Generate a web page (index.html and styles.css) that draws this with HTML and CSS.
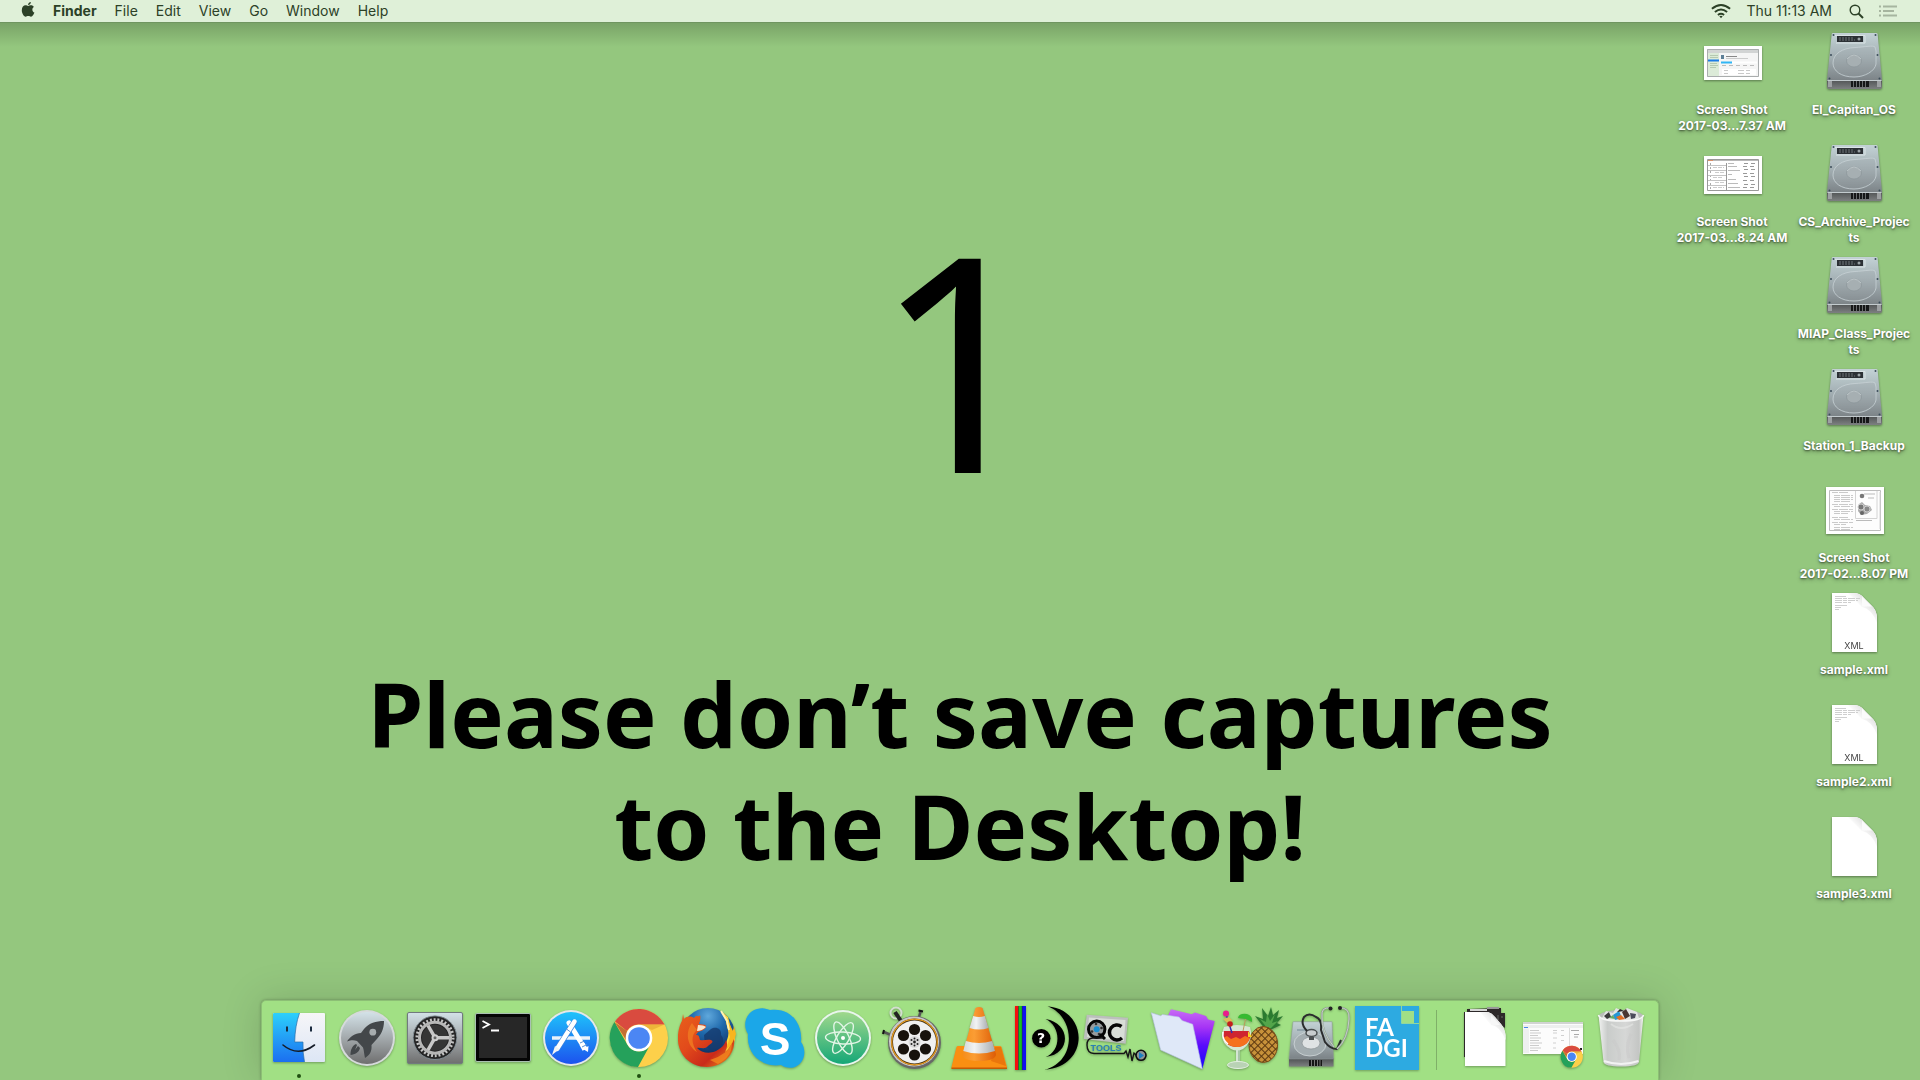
FILE: index.html
```html
<!DOCTYPE html>
<html lang="en">
<head>
<meta charset="utf-8">
<title>Finder</title>
<link rel="stylesheet" href="styles.css">
</head>
<body>
<svg class="defs" width="0" height="0" aria-hidden="true">
  <defs>
    <linearGradient id="metal" x1="0" y1="0" x2="0" y2="1"><stop offset="0" stop-color="#c3d2d5"/><stop offset=".5" stop-color="#a3afb3"/><stop offset="1" stop-color="#7b8286"/></linearGradient>
    <linearGradient id="metalFront" x1="0" y1="0" x2="0" y2="1"><stop offset="0" stop-color="#4c4f50"/><stop offset="1" stop-color="#7d8081"/></linearGradient>
    <linearGradient id="silver" x1="0" y1="0" x2="0" y2="1"><stop offset="0" stop-color="#d3e2e8"/><stop offset=".5" stop-color="#a3a9ac"/><stop offset="1" stop-color="#6f6f6f"/></linearGradient>
    <linearGradient id="finderBlue" x1="0" y1="0" x2="0" y2="1"><stop offset="0" stop-color="#2cd0fb"/><stop offset="1" stop-color="#1b6ff0"/></linearGradient>
    <linearGradient id="finderWhite" x1="0" y1="0" x2="0" y2="1"><stop offset="0" stop-color="#f6f6f8"/><stop offset="1" stop-color="#dde6f5"/></linearGradient>
    <linearGradient id="storeBlue" x1="0" y1="0" x2="0" y2="1"><stop offset="0" stop-color="#1fc3fb"/><stop offset="1" stop-color="#1c52ee"/></linearGradient>
    <linearGradient id="atomGreen" x1="0" y1="0" x2="0" y2="1"><stop offset="0" stop-color="#a0d88c"/><stop offset="1" stop-color="#15a777"/></linearGradient>
    <linearGradient id="violet" x1="0" y1="0" x2="0" y2="1"><stop offset="0" stop-color="#c86cf5"/><stop offset=".3" stop-color="#a634f5"/><stop offset=".6" stop-color="#5a0cfc"/><stop offset="1" stop-color="#1408fa"/></linearGradient>
    <linearGradient id="foxFur" x1="0" y1="0" x2="1" y2="1"><stop offset="0" stop-color="#e8601c"/><stop offset=".4" stop-color="#e24a1b"/><stop offset=".7" stop-color="#c92a1a"/><stop offset="1" stop-color="#f6a21b"/></linearGradient>
    <radialGradient id="globe" cx=".5" cy=".15" r=".8"><stop offset="0" stop-color="#5fa8dc"/><stop offset=".4" stop-color="#1f69ac"/><stop offset="1" stop-color="#0d2350"/></radialGradient>
    <linearGradient id="coneOrange" x1="0" y1="0" x2="1" y2="0"><stop offset="0" stop-color="#f58d1c"/><stop offset=".35" stop-color="#fb9d34"/><stop offset="1" stop-color="#dd5c06"/></linearGradient>
    <linearGradient id="coneWhite" x1="0" y1="0" x2="1" y2="0"><stop offset="0" stop-color="#d5d8da"/><stop offset=".35" stop-color="#f2f3f4"/><stop offset="1" stop-color="#a7acb0"/></linearGradient>
    <linearGradient id="bin" x1="0" y1="0" x2="1" y2="0"><stop offset="0" stop-color="#f1f2f1"/><stop offset=".2" stop-color="#c9ccca"/><stop offset=".6" stop-color="#d6d7d6"/><stop offset=".9" stop-color="#c4c6c4"/><stop offset="1" stop-color="#f4f5f4"/></linearGradient>
    <linearGradient id="curl" x1="0" y1="1" x2="1" y2="0"><stop offset="0" stop-color="#ffffff"/><stop offset=".45" stop-color="#ffffff"/><stop offset="1" stop-color="#c4c4c4"/></linearGradient>
    <pattern id="scales" width="5" height="5" patternUnits="userSpaceOnUse" patternTransform="rotate(45)"><rect width="5" height="5" fill="#c8923a"/><path d="M0 0H5M0 0V5" stroke="#5c3810" stroke-width="2.200"/></pattern>

    <symbol id="drive" viewBox="0 0 64 72">
      <path d="M5 52H60V60Q60 62 58 62H7Q5 62 5 60Z" fill="url(#metalFront)"/>
      <path d="M6 54h4v6H6zM55 54h4v6h-4z" fill="#9da0a2"/>
      <path d="M29 54h18v6H29z" fill="#161718"/>
      <path d="M31.500 54v6M34.500 54v6M37.500 54v6M40.500 54v6M43.500 54v6" stroke="#696c6d"/>
      <path d="M11 6H54Q55.500 6 55.600 7L60 52.500Q60 54 59 54H6Q5 54 5 52.500L9.700 7Q10 6 11 6Z" fill="url(#metal)"/>
      <path d="M5.500 53.500H59.500" stroke="#c3cbce"/>
      <path d="M13 8.500H43V16H14" fill="none" stroke="#dbe4e6" stroke-width="1"/>
      <path d="M15 9H41V15H15Z" fill="#2c3135"/>
      <path d="M17 11H31M17 13H33" stroke="#8a9396" stroke-dasharray="2 1" stroke-width=".7"/>
      <circle cx="37" cy="12" r="1.500" fill="#9aa2a5"/>
      <path d="M54 24V37C53 44 43 50 32 50C19 50 11 44 11 36C11 27 20 21 33 20.500C43 20 51 18 53 20Z" fill="#9aa5a9" fill-opacity=".25" stroke="#c8d2d5" stroke-width=".8"/>
      <ellipse cx="32" cy="34" rx="7.500" ry="6" fill="#a6afb2" stroke="#8b9599" stroke-width=".7"/>
      <path d="M25 32Q32 24 39 32" fill="none" stroke="#ccd4d6" stroke-width=".7"/>
      <g fill="#3b4d5a"><circle cx="11.500" cy="8" r="1"/><circle cx="53.500" cy="8" r="1"/><circle cx="9" cy="28" r="1"/><circle cx="55.500" cy="28" r="1"/><circle cx="7.500" cy="51.500" r="1"/><circle cx="57.500" cy="51.500" r="1"/></g>
    </symbol>
    <symbol id="sheet" viewBox="0 0 64 72">
      <path d="M10 6H32Q38 6 42 11L51 20Q55 25 55 31V65H10Z" fill="#fff"/>
      <path d="M26 6H32Q38 6 42 11L51 20Q55 25 55 31V36Q50 22 40 20Z" fill="url(#curl)"/>
      <path d="M40 9.500V19.500H50Z" fill="#fbfbfb"/>
    </symbol>
    <symbol id="sheetText" viewBox="0 0 64 72">
      <g stroke="#cfcfcf" stroke-width="1" fill="none"><path d="M13 9.500H24"/><path d="M13 11.500H39M13 13.500H36M13 15.500H29" stroke-dasharray="7 1 4 1"/><path d="M13 18.500H25M13 20.500H19M13 22.500H17"/></g>
    </symbol>
    <symbol id="chrome" viewBox="0 0 64 64">
      <circle cx="32" cy="32" r="29" fill="#fdd04a"/>
      <path d="M8 15.500A29 29 0 0 1 57.500 18.500H32A13.500 13.500 0 0 0 20 25Z" fill="#d94b3f"/>
      <path d="M7.500 16A29 29 0 0 0 31 61L42 41A13.500 13.500 0 0 1 20 38Z" fill="#25a15b"/>
      <path d="M32 18.500H57.500L45 24Z" fill="#e3a32e" opacity=".6"/>
      <path d="M7.500 16L19 34L20 25Z" fill="#9f2f27" opacity=".6"/>
      <circle cx="32" cy="32" r="13.300" fill="#fff"/>
      <circle cx="32" cy="32" r="10.800" fill="#4b86f4"/>
    </symbol>
  </defs>
</svg>

<header class="menubar">
  <nav class="menus" aria-label="Menu bar">
    <button class="menu menu-apple" type="button" aria-label="Apple">
      <svg width="14" height="18" viewBox="0 0 14 18"><path d="M9.900 2C9.800 3.700 8.600 5 7 5.100C6.900 3.600 8.300 2.200 9.900 2Z"/><path d="M7.100 6C7.900 6 8.700 5.300 10 5.300C11.200 5.300 12.300 6 12.900 6.900C10.600 8.300 11 11.500 13.400 12.500C12.700 14.500 11.500 16.700 10 16.700C9 16.700 8.600 16 7.300 16C6 16 5.600 16.700 4.600 16.700C2.800 16.600 .8 13.200 .8 10.200C.8 7.100 2.600 5.300 4.500 5.300C5.600 5.300 6.400 6 7.100 6Z"/></svg>
    </button>
    <button class="menu menu-app" type="button">Finder</button>
    <button class="menu" type="button">File</button>
    <button class="menu" type="button">Edit</button>
    <button class="menu" type="button">View</button>
    <button class="menu" type="button">Go</button>
    <button class="menu" type="button">Window</button>
    <button class="menu" type="button">Help</button>
  </nav>
  <div class="status">
    <button class="menu" type="button" aria-label="Wi-Fi">
      <svg width="20" height="16" viewBox="0 0 20 16"><g fill="none" stroke="#2c4127" stroke-width="2"><path d="M.9 5.800Q10-1.800 19.100 5.800"/><path d="M3.900 9Q10 4 16.100 9"/><path d="M6.900 12Q10 9.700 13.100 12"/></g><path d="M8.300 13.300Q10 12 11.700 13.300L10 15.300Z"/></svg>
    </button>
    <button class="menu clock" type="button">Thu 11:13 AM</button>
    <button class="menu" type="button" aria-label="Spotlight">
      <svg width="15" height="15" viewBox="0 0 15 15"><g fill="none" stroke="#2c4127"><circle cx="6" cy="6" r="4.800" stroke-width="1.400"/><path d="M9.500 9.500L14 14" stroke-width="2"/></g></svg>
    </button>
    <button class="menu" type="button" aria-label="Notification Center">
      <svg width="18" height="12" viewBox="0 0 18 12"><path d="M0 1.500H2M4 1.500H18M0 6H2M4 6H15M0 10.500H2M4 10.500H18" stroke="#a6b59f" stroke-width="2"/></svg>
    </button>
  </div>
</header>

<main class="desktop">
  <div class="wallpaper">
    <p class="station">1</p>
    <h1 class="notice">Please don’t save captures<br>to the Desktop!</h1>
  </div>

  <ul class="files">
    <li class="file"><svg class="file-icon" viewBox="0 0 64 72"><use href="#drive"/></svg><span>El_Capitan_OS</span></li>
    <li class="file"><svg class="file-icon" viewBox="0 0 64 72"><use href="#drive"/></svg><span>CS_Archive_Projec<br>ts</span></li>
    <li class="file"><svg class="file-icon" viewBox="0 0 64 72"><use href="#drive"/></svg><span>MIAP_Class_Projec<br>ts</span></li>
    <li class="file"><svg class="file-icon" viewBox="0 0 64 72"><use href="#drive"/></svg><span>Station_1_Backup</span></li>
    <li class="file"><svg class="file-icon" viewBox="0 0 64 72">
      <path d="M4 12H62V59H4Z" fill="#fff"/><path d="M7.500 15.500H58.500V55.500H7.500Z" fill="#fdfdfd" stroke="#bdbdbd"/>
      <path d="M10 17.500H27M12 20.500H31M12 22.500H31M12 24.500H31M12 26.500H28M10 29.500H31M12 31.500H31M10 34.500H31M12 36.500H31M12 38.500H26M10 42.500H27M12 44.500H31M10 47.500H31M12 49.500H24M12 52.500H31M12 54.500H28" stroke="#cacaca" stroke-dasharray="6 1 9 1"/>
      <path d="M33.500 16V43.500H55V16M58 17V54" fill="none" stroke="#d4d4d4"/><path d="M34 45.500H50M42 19H53M46 23H52" stroke="#bbb"/>
      <circle cx="40" cy="21" r="2.300" fill="#777"/><path d="M37 29L40 27L43 30L48 31L50 35L45 39L39 40L36 36Z" fill="#aaa"/><circle cx="39" cy="32" r="3" fill="#777" stroke="#ccc"/><circle cx="45" cy="34" r="3" fill="#888" stroke="#ccc"/><circle cx="40" cy="38" r="2" fill="#666"/>
    </svg><span>Screen Shot<br>2017-02…8.07 PM</span></li>
    <li class="file"><svg class="file-icon" viewBox="0 0 64 72"><use href="#sheet"/><use href="#sheetText"/><text class="kind" x="32" y="62" text-anchor="middle">XML</text></svg><span>sample.xml</span></li>
    <li class="file"><svg class="file-icon" viewBox="0 0 64 72"><use href="#sheet"/><use href="#sheetText"/><text class="kind" x="32" y="62" text-anchor="middle">XML</text></svg><span>sample2.xml</span></li>
    <li class="file"><svg class="file-icon" viewBox="0 0 64 72"><use href="#sheet"/></svg><span>sample3.xml</span></li>
    <li class="file"><svg class="file-icon" viewBox="0 0 64 72">
      <path d="M4 19H62V53H4Z" fill="#fff"/><path d="M7 22H59V50H7Z" fill="#f5f5f5"/><path d="M7 22H59V26H7Z" fill="#d2d4d4"/><path d="M7 26H19V50H7Z" fill="#dcebd8"/><path d="M7.500 22.500H58.500V49.500H7.500Z" fill="none" stroke="#a9adad"/>
      <path d="M8 33.500H19" stroke="#1b7ce8" stroke-width="2"/><path d="M10 28.500H18M10 30.500H18M10 36.500H17M10 38.500H18M10 40.500H16" stroke="#b5c9b1"/>
      <path d="M21 28H24V32H21Z" fill="#5d7f96"/><path d="M26 29.500H37" stroke="#888"/><path d="M26 31.500H48" stroke="#ccc"/><path d="M21 35.500H32" stroke="#30b6f5" stroke-width="2"/><path d="M32 35.500H57" stroke="#fff" stroke-width="2"/><path d="M22 38.500H56" stroke="#bbb" stroke-dasharray="4 3"/>
      <path d="M22 42H56V48H22Z" fill="#fff"/><path d="M24 43.500H56M24 46.500H56" stroke="#c9c9c9" stroke-dasharray="4 10 6 2"/>
    </svg><span>Screen Shot<br>2017-03…7.37 AM</span></li>
    <li class="file"><svg class="file-icon" viewBox="0 0 64 72">
      <path d="M4 17H62V55H4Z" fill="#fff"/><path d="M7.500 20.500H58.500V51.500H7.500Z" fill="#fff" stroke="#999"/><path d="M8 21.500H58" stroke="#b9b9b9"/><path d="M8 21.500H13" stroke="#d88f6a"/>
      <path d="M26.500 24V51" stroke="#999"/><path d="M10.500 24V51" stroke="#aaa" stroke-dasharray="2 2"/>
      <path d="M8 26.500H26M8 31.500H26M8 36.500H26M8 41.500H26M8 46.500H26" stroke="#c4c4c4"/><path d="M13 28.500H24M15 33.500H25M13 38.500H22M15 43.500H25M13 48.500H24" stroke="#ccc" stroke-dasharray="4 1"/>
      <path d="M28 24.500H34M28 27.500H37M28 31.500H40M28 35.500H32M28 40.500H36M28 44.500H38M28 48.500H40" stroke="#bbb"/>
      <path d="M44 24.500H57M43 27.500H57M44 30.500H57M43 34.500H57M44 37.500H57M43 41.500H57M44 45.500H57M43 48.500H57" stroke="#999" stroke-dasharray="4 3"/>
    </svg><span>Screen Shot<br>2017-03…8.24 AM</span></li>
  </ul>

  <nav class="dock" aria-label="Dock">
    <button class="app running" type="button" aria-label="Finder"><svg viewBox="0 0 64 64">
      <rect x="6" y="7" width="52" height="49" rx="1" fill="url(#finderWhite)"/>
      <path d="M7 7H32.500Q28 20 27.700 36H36Q35.500 46 37.500 56H7Q6 56 6 55V8Q6 7 7 7Z" fill="url(#finderBlue)"/>
      <path d="M32.500 7Q28 20 27.700 36H36Q35.500 46 37.500 56" fill="none" stroke="#2c6ea8" stroke-width=".7"/>
      <path d="M20 20.500V25.500M44 20.500V25.500" stroke="#1b2b3f" stroke-width="2"/>
      <path d="M16 39Q31 51.500 47.500 39" fill="none" stroke="#151c28" stroke-width="1.600" stroke-linecap="round"/>
    </svg></button>
    <button class="app" type="button" aria-label="Launchpad"><svg viewBox="0 0 64 64">
      <circle cx="32" cy="32" r="28" fill="#d6dadb"/><circle cx="32" cy="32" r="26" fill="url(#silver)"/>
      <path d="M49 15C41 15 34 17 29 23L26 27C20 27 15 31 12 35.500C16 34 19 34 22 35L28 41.500C29 44 29 48 30 52C35 49 37 45 36.500 39L41 34C46 29 49 23 49 15Z" fill="#43474a"/>
      <circle cx="37.800" cy="26.200" r="3.400" fill="#a6acae"/>
      <path d="M21 38C17 40 15.500 44 15.500 49C20 48.500 24 46.500 25 42L23 40L20 44L22 39Z" fill="#43474a"/>
    </svg></button>
    <button class="app" type="button" aria-label="System Preferences"><svg viewBox="0 0 64 64">
      <rect x="4.500" y="6.500" width="55" height="51" rx="1.500" fill="url(#silver)" stroke="#717a7e"/>
      <circle cx="32" cy="31.700" r="22" fill="#252526"/><circle cx="32" cy="31.700" r="21.800" fill="none" stroke="#93a1a8" stroke-width=".8"/>
      <circle cx="32" cy="31.700" r="18" fill="none" stroke="#c6c6c6" stroke-width="3" stroke-dasharray="1.900 1.870"/>
      <circle cx="32" cy="31.700" r="15.500" fill="none" stroke="#b7b7b7" stroke-width="3"/>
      <circle cx="32" cy="31.700" r="13" fill="#353535"/>
      <path d="M32 31.700H46M32 31.700L25 19.500M32 31.700L25 44" stroke="#c8c8c8" stroke-width="3.500"/>
      <circle cx="32" cy="31.700" r="3.500" fill="#cfcfcf"/><circle cx="32" cy="31.700" r="1.500" fill="#666"/>
    </svg></button>
    <button class="app" type="button" aria-label="Terminal"><svg viewBox="0 0 64 64">
      <rect x="4.500" y="7.500" width="55" height="48" rx="1.500" fill="#050505" stroke="#a9c0b2"/><rect x="8" y="11" width="48" height="41" fill="#272727"/>
      <path d="M11.500 15L18 18.500L11.500 22M20 24.500H28" fill="none" stroke="#fff" stroke-width="1.800"/>
    </svg></button>
    <button class="app" type="button" aria-label="App Store"><svg viewBox="0 0 64 64">
      <circle cx="32" cy="32" r="28" fill="#e4e8ea"/><circle cx="32" cy="32" r="26" fill="url(#storeBlue)"/>
      <path d="M13 32H51" stroke="#e9f1fa" stroke-width="3.500"/>
      <path d="M30 17L43 38" stroke="#fff" stroke-width="5" stroke-linecap="round"/><path d="M43 38L46 43.500" stroke="#fff" stroke-width="5.500"/><path d="M41 37L45.500 35M43 41L48 38.500" stroke="#5a91d0" stroke-width="1"/><path d="M44 43L49.500 40L49 46Z" fill="#fff"/>
      <path d="M36 15L18 43" stroke="#3f84dd" stroke-width="6"/><path d="M35.500 15.500L18 43" stroke="#fff" stroke-width="4.500" stroke-linecap="round"/><path d="M16 40L20.500 43L13 49Z" fill="#f3f3f3"/><path d="M27.500 23L31.500 26" stroke="#5a91d0"/>
    </svg></button>
    <button class="app running" type="button" aria-label="Google Chrome"><svg viewBox="0 0 64 64"><use href="#chrome"/></svg></button>
    <button class="app" type="button" aria-label="Firefox"><svg viewBox="0 0 64 64">
      <circle cx="33" cy="29" r="27" fill="url(#globe)"/>
      <path d="M36 23C40 20 47 22 46 29C51 34 47 42 39 46L30 40L29 29Z" fill="#153a6d" opacity=".8"/>
      <path d="M46 5C49 9 52 14 52 20C54 24 54 29 52 34C50 42 44 47 36 47L40 55L55 47L60 34L59 23L57 26L53 11Z" fill="#fbd838"/>
      <path d="M49 7L52 20L55 31L51 43L58 39L61 28L59 20L58 25Z" fill="#f7b51f"/><path d="M46 5L52 15L54 24" fill="none" stroke="#fff3b0" stroke-width="2"/>
      <path d="M8 8L9 13C12 10 16 10 19 12C22 8 24 12 25 9C26 12 25 15 24 18C29 19 30 18 31 20C31 23 27 25 23 26L21 29C24 29 24 30 25 34C29 35 32 33 36 34C40 36 35 38 33 40C30 44 25 41 22 42C26 47 35 48 41 45C47 42 50 38 51 34C53 38 52 43 50 46C54 43 57 38 59 33C61 47 49 61 32 61C15 61 2 48 3 31C3 25 5 18 7 15Z" fill="url(#foxFur)"/>
      <path d="M23 19Q29 19 31 21Q27 25 22 25Z" fill="#fae7ce"/><path d="M17 17C10 26 12 40 22 46C16 37 16 29 22 24" fill="#ed7220"/><path d="M35 54Q52 49 57 37Q57 51 43 58Z" fill="#f3861e" opacity=".8"/>
    </svg></button>
    <button class="app" type="button" aria-label="Skype"><svg viewBox="0 0 64 64">
      <path d="M14 3C20 1 24 3 27 4C47 1 60 17 58 36C64 44 62 57 52 61C46 63 41 61 38 59C19 62 3 48 5 28C-1 19 3 6 14 3Z" fill="#1ba7e8"/>
      <text class="skype-s" x="32" y="49" text-anchor="middle">S</text>
    </svg></button>
    <button class="app" type="button" aria-label="Atom"><svg viewBox="0 0 64 64">
      <circle cx="32" cy="32" r="28" fill="#e9f6ec"/><circle cx="32" cy="32" r="26" fill="url(#atomGreen)"/>
      <g fill="none" stroke="#e2f5e6" stroke-width="1.400"><ellipse cx="32" cy="32" rx="17.500" ry="6" transform="rotate(3 32 32)"/><ellipse cx="32" cy="32" rx="17.500" ry="6" transform="rotate(65 32 32)"/><ellipse cx="32" cy="32" rx="17.500" ry="6" transform="rotate(121 32 32)"/></g><circle cx="32" cy="32" r="2" fill="#fff"/>
    </svg></button>
    <button class="app" type="button" aria-label="Stopwatch reel"><svg viewBox="0 0 64 64">
      <circle cx="17" cy="7" r="5.500" fill="none" stroke="#d3ded0" stroke-width="2"/><path d="M16 6L22 15" stroke="#222" stroke-width="4"/><path d="M42 4L40 11M5 26L12 29" stroke="#555" stroke-width="2.500"/><path d="M39.500 4.500L44 5.500M5 24L4 28" stroke="#111" stroke-width="2"/>
      <circle cx="35.500" cy="36.500" r="26.500" fill="#686868"/><circle cx="35" cy="35.500" r="25" fill="#c9c9c9"/><circle cx="35.500" cy="36" r="23.500" fill="#4b3516"/><circle cx="35.500" cy="36" r="22.800" fill="none" stroke="#e79c20" stroke-width="1.300"/><circle cx="35.500" cy="36" r="21.500" fill="#f0f0f0"/>
      <g fill="#17120c"><circle cx="35.500" cy="23.500" r="5.600"/><circle cx="46.500" cy="29.500" r="5.600"/><circle cx="46.500" cy="43" r="5.600"/><circle cx="35.500" cy="49" r="5.600"/><circle cx="24.500" cy="43" r="5.600"/><circle cx="24.500" cy="29.500" r="5.600"/></g>
      <circle cx="35.500" cy="36" r="6" fill="#d9d9d9"/><g fill="#222"><circle cx="35.500" cy="36" r="1.400"/><circle cx="35.500" cy="32.500" r="1"/><circle cx="38.500" cy="34" r="1"/><circle cx="38.500" cy="38" r="1"/><circle cx="35.500" cy="39.500" r="1"/><circle cx="32.500" cy="38" r="1"/><circle cx="32.500" cy="34" r="1"/></g>
    </svg></button>
    <button class="app" type="button" aria-label="VLC"><svg viewBox="0 0 64 64">
      <path d="M11 40H53Q54 40 54.500 41L60 61Q60 63 58.500 63H5.500Q4 63 4.500 61L9.500 41Q10 40 11 40Z" fill="#fa8f12"/><path d="M4.500 61.500H60V63H4.500Z" fill="#c55a05"/><path d="M48 41L54 41L59 60L44 55Z" fill="#e26b0a" opacity=".7"/>
      <path d="M28.500 2Q32 0 35.500 2L49 48Q49 55 32 55Q15.500 55 15.500 48Z" fill="url(#coneOrange)"/>
      <path d="M26.200 10Q32 12 37.800 10L41.500 22Q32 25 22.600 22Z" fill="url(#coneWhite)"/>
      <path d="M18.800 35Q32 39 45.200 35L48 45Q32 50 16.300 45Z" fill="url(#coneWhite)"/>
    </svg></button>
    <button class="app" type="button" aria-label="Media quality"><svg viewBox="0 0 64 64">
      <path d="M0 0H3.500V64H0Z" fill="#f60f0c"/><path d="M3.500 0H7V64H3.500Z" fill="#18c220"/><path d="M7 0H11V64H7Z" fill="#1010f2"/><path d="M3.500 0V64M7.200 0V64" stroke="#234" stroke-width=".6"/>
      <circle cx="26.300" cy="32.300" r="9.200"/><text class="quiz" x="26" y="37" text-anchor="middle">?</text>
      <path d="M30.500 13C56 17 57 48 30.500 51C47 45 46 20 30.500 13Z"/><path d="M32.500 .3C74 4 75 61 29.500 63.700C63 55 60 10 32.500 .3Z"/>
    </svg></button>
    <button class="app" type="button" aria-label="QCTools"><svg viewBox="0 0 64 64">
      <path d="M3.700 8.700L45 11.700L42.700 37.700L.7 33Z" fill="#bcbfbd"/><path d="M6 11.500L42.500 14L41 35L4 31Z" fill="#d8ddd7"/>
      <circle cx="13.700" cy="23.300" r="8.200" fill="#969b9d" stroke="#050505" stroke-width="3"/><circle cx="13.700" cy="23.300" r="3" fill="#1a8fd0"/><g fill="#333"><circle cx="13" cy="18" r="1.300"/><circle cx="18.500" cy="22" r="1.300"/><circle cx="9" cy="25.500" r="1.300"/><circle cx="16" cy="28" r="1.300"/></g>
      <path d="M38.500 20.500A7.500 7.500 0 1 0 39 32" fill="none" stroke="#050505" stroke-width="3.500"/><path d="M17 28L22 33" stroke="#050505" stroke-width="3"/>
      <path d="M20 32H10Q4 32 4 39Q4 47 11 47.500H41L43 45L45 51L47 43L49 55L51 47L54 50" fill="none" stroke="#151515" stroke-width="1.400"/>
      <text class="tools" x="23" y="45" text-anchor="middle">TOOLS</text>
      <circle cx="58" cy="49.300" r="5" fill="#8d9395" stroke="#0c0c0c" stroke-width="1.600"/><path d="M56 46L61 49.500L56 53Z" fill="#1c7fc0"/>
    </svg></button>
    <button class="app" type="button" aria-label="Folders"><svg viewBox="0 0 64 64">
      <path d="M17.300 9L20 3.300L40.700 8.300L44 6.500L55 10L57 13.500L63.700 15L51.300 63L30 40Z" fill="url(#violet)"/>
      <path d="M.3 6.700L9.700 9.800L11.500 8.500L28 11L31 14.500L41.700 18.300L51.300 63L9.700 44Z" fill="#dfe8f8" stroke="#b5c3e4" stroke-width=".6"/>
    </svg></button>
    <button class="app" type="button" aria-label="Cocktail"><svg viewBox="0 0 64 64">
      <path d="M46 23L36 10L44 13L43 2L49 10L52 1L54 9L60 4L58 12L64 10L58 17L62 19L51 24Z" fill="#2b7a30"/><path d="M48 22L41 13L47 16L48 8L51 15L56 8L53 17L59 15L52 22" fill="#53a54a"/>
      <ellipse cx="44.300" cy="38.500" rx="14.300" ry="18" fill="url(#scales)"/><ellipse cx="44.300" cy="38.500" rx="14.300" ry="18" fill="none" stroke="#7a4c17"/>
      <path d="M19 44V56" stroke="#a7c6a6" stroke-width="4"/><path d="M18 44V56" stroke="#eef6ee" stroke-width="1.300"/><ellipse cx="19" cy="59" rx="10.500" ry="3.500" fill="#b9d2b5" stroke="#e4efe2"/>
      <path d="M5 21Q18 17 31 21Q35 35 24 43Q18 46 12 43Q-1 35 5 21Z" fill="#d7e6d2"/><path d="M5 25H30Q34 35 23 40Q18 42 12 40Q1 35 5 25Z" fill="#cf2430"/><path d="M4 32L8 30L12 33L17 31L21 33L26 30L31 32Q28 40 20 41Q9 42 4 32Z" fill="#f5701d"/>
      <path d="M4 26Q3 34 9 38" fill="none" stroke="#fff" stroke-width="1.500"/>
      <path d="M7 8L13 27" stroke="#3030b0" stroke-width="1.500"/><circle cx="7" cy="7.500" r="3" fill="#e91e8c"/><path d="M4 13L10 11L14 15L8 17Z" fill="#d8c05c"/><circle cx="11" cy="18" r="2.800" fill="#c5201d"/>
      <path d="M24 25L27 11" stroke="#b99b5a"/><path d="M19 12Q20 7 28 8Q34 10 33 16L27 13Z" fill="#36ba31"/><path d="M29 25L33 31L29 31Z" fill="#f5d21d"/>
    </svg></button>
    <button class="app" type="button" aria-label="Disk Utility"><svg viewBox="0 0 64 64">
      <path d="M2 52H46.500V60.500H2Z" fill="url(#metalFront)"/><path d="M22 54H35V60H22Z" fill="#151515"/><path d="M24.500 54v6M27.500 54v6M30.500 54v6M33 54v6" stroke="#777"/>
      <path d="M6 15.700H45L46.500 53H2Z" fill="url(#metal)" stroke="#8e989b" stroke-width=".5"/><path d="M10 24H27" stroke="#93a5ad" stroke-width="2"/>
      <ellipse cx="23" cy="38" rx="16" ry="12" fill="#a3adb0" stroke="#d9dfe1" stroke-width=".7"/><ellipse cx="24" cy="37" rx="9" ry="6" fill="#dfe3e4" stroke="#8d9497" stroke-width=".7"/>
      <ellipse cx="24.500" cy="27" rx="5.500" ry="3.500" fill="#c8cdce" stroke="#4a4f50" stroke-width="1.500"/><path d="M22 31H27V34H22Z" fill="#4b5051"/>
      <path d="M20 25Q13 18 17 11Q22 6 29 11Q35 13 34 24L38 36Q43 43 50 43L54 34" fill="none" stroke="#2a2c2d" stroke-width="2"/>
      <path d="M43 2Q34 1 35 10Q34 25 47 41M52 2Q63 1 62 13Q61 33 50 43" fill="none" stroke="#8d9991" stroke-width="1.800"/><path d="M43 2Q34 1 35 10Q34 25 47 41M52 2Q63 1 62 13Q61 33 50 43" fill="none" stroke="#dce7dc" stroke-width=".7"/><circle cx="43.500" cy="2.500" r="2" fill="#222"/><circle cx="53" cy="2" r="2" fill="#222"/>
    </svg></button>
    <button class="app" type="button" aria-label="FADGI"><svg viewBox="0 0 64 64">
      <path d="M0 0H64V64H0Z" fill="#2daae1"/><path d="M46.500 0V17.500H64" fill="none" stroke="#8fd7a0" stroke-width="1"/><path d="M47 5H59V17H47Z" fill="#a0df86"/>
      <text class="fadgi" x="10" y="30">FA</text><text class="fadgi" x="10" y="51">DGI</text>
    </svg></button>
    <span class="divider" role="separator"></span>
    <button class="app" type="button" aria-label="Documents"><svg viewBox="0 0 64 64">
      <path d="M14 3L48 2V7H52V22L40 12L12 10V51H11V6H14Z" fill="#2d2829"/><path d="M17 4H34" stroke="#d5d5d5" stroke-width="2"/><path d="M34 2H46" stroke="#999" stroke-width="2"/><path d="M45 9V14M49 10V12" stroke="#666"/>
      <path d="M12 6H35Q39 7 42 11L48 18Q52 23 52.500 29V60H12Z" fill="#fff"/><path d="M27 6H35Q39 7 42 11L48 18Q52 23 52.500 29V34Q47 20 38 19Z" fill="url(#curl)"/><path d="M38 9V19H47Z" fill="#f7f7f7"/>
    </svg></button>
    <button class="app" type="button" aria-label="Chrome window"><svg viewBox="0 0 64 64">
      <path d="M2 16H62V48H2Z" fill="#fcfcfc"/><path d="M2 16H62V18H2Z" fill="#d1d4d2"/><path d="M2 19H62V22H2Z" fill="#edefee"/><path d="M3 21.500H7" stroke="#4b86e8"/><path d="M2 22.500H8V47H2Z" fill="#eef0f0"/>
      <path d="M9 24.500H18M9 27H20M9 29.500H17M9 32H20M9 34.500H18M9 37H21M9 39.500H18M9 42H20M9 44.500H17" stroke="#ccc"/><path d="M32 24.500H36M32 27H36M32 32H36M32 37H35M32 42H35M40 24.500H43M40 29.500H43M40 34.500H43" stroke="#d0d0d0"/><path d="M48.500 22V47" stroke="#ddd"/><path d="M50 24.500H58M53 28.500H58M53 31H57" stroke="#aaa"/><path d="M59 42H61V44H59Z" fill="#222"/>
      <use href="#chrome" x="38.500" y="38.500" width="24.500" height="24.500"/>
    </svg></button>
    <button class="app" type="button" aria-label="Trash"><svg viewBox="0 0 64 64">
      <ellipse cx="32" cy="10" rx="22" ry="6" fill="#b9bdb9"/>
      <path d="M13 12L17 5L24 7L27 2L34 5L38 2L43 4L48 6L50 12L42 15L22 15Z" fill="#e3e5e3"/><path d="M15 10L20 6L22 11L18 13Z" fill="#3a3a3a"/><path d="M24 9L30 5L33 12L26 14Z" fill="#2596d4"/><path d="M33 6L37 3L41 10L36 13Z" fill="#483632"/><path d="M27 11L32 9L36 13L30 14Z" fill="#df6e24"/><path d="M41 7L47 8L46 12L42 13Z" fill="#4c4c5c"/><path d="M28 6L31 3L35 5Z" fill="#2a2a2a"/><path d="M20 12L24 9L26 13Z" fill="#6a6"/>
      <path d="M9.500 9Q11 15 32 15Q53 15 54.500 9L50 56Q49 60.500 32 60.500Q15.500 60.500 14.500 56Z" fill="url(#bin)"/>
      <path d="M9.500 9Q11 15 32 15Q53 15 54.500 9" fill="none" stroke="#f6f7f6" stroke-width="1.500"/><path d="M15 55Q32 61 49.500 55" fill="none" stroke="#f2f2f2" stroke-width="2"/><path d="M22 18Q32 26 44 18" fill="none" stroke="#e6e7e6" stroke-width="2" opacity=".6"/><path d="M24 34Q32 44 30 54M42 28Q36 40 40 52" fill="none" stroke="#c9cac9" stroke-width="3" opacity=".5"/>
    </svg></button>
  </nav>
</main>
</body>
</html>
```
FILE: styles.css
```css
* {
  box-sizing: border-box;
}

body {
  margin: 0;
  min-height: 100vh;
  display: flex;
  flex-direction: column;
  background: #94c77e;
  font-family: Inter, "Liberation Sans", sans-serif;
  overflow: hidden;
}

button {
  border: 0;
  padding: 0;
  background: none;
  font: inherit;
  color: inherit;
}

.defs {
  position: absolute;
}

.menubar {
  display: flex;
  justify-content: space-between;
  height: 23px;
  padding: 0 23px 0 21px;
  background: #dff0d8;
  border-bottom: 1px solid #6f9560;
  color: #2c4127;
  fill: #2c4127;
  font-size: 14px;
  line-height: 22px;
}

.menus,
.status {
  display: flex;
  gap: 18px;
}

.menu {
  display: flex;
  align-items: center;
}

.menu-apple {
  align-items: flex-start;
}

.menu-app {
  font-weight: 700;
}

.status {
  gap: 15px;
}

.clock {
  padding-right: 2px;
}

.desktop {
  position: relative;
  flex: 1;
  display: flex;
  flex-direction: column;
}

.desktop::before {
  content: "";
  height: 24px;
  background: linear-gradient(rgba(0, 0, 0, 0.18), rgba(0, 0, 0, 0));
}

.wallpaper {
  padding-top: 150px;
  text-align: center;
  color: #000;
  font-family: "Noto Sans", sans-serif;
}

.station {
  margin: 0;
  font-size: 300px;
  line-height: 320px;
}

.notice {
  margin: 140px 0 0;
  font-size: 90px;
  font-weight: 700;
  line-height: 112px;
}

.files {
  position: absolute;
  top: 4px;
  right: 5px;
  margin: 0;
  padding: 0;
  list-style: none;
  display: grid;
  grid-template-rows: repeat(8, 112px);
  grid-auto-columns: 122px;
  grid-auto-flow: column;
  direction: rtl;
}

.file {
  direction: ltr;
  display: flex;
  flex-direction: column;
  align-items: center;
  gap: 3px;
  color: #fff;
  font-size: 12px;
  font-weight: 700;
  line-height: 16px;
  text-align: center;
  text-shadow: 0 1px 2px rgba(0, 0, 0, 0.5), 0 2px 4px rgba(0, 0, 0, 0.3);
}

.file-icon {
  width: 64px;
  height: 72px;
  text-shadow: none;
  filter: drop-shadow(0 1px 1px rgba(0, 0, 0, 0.4));
}

.kind {
  font-size: 9px;
  font-weight: 400;
  fill: #444;
}

.dock {
  position: absolute;
  bottom: 0;
  left: 50%;
  transform: translateX(-50%);
  display: flex;
  gap: 4px;
  height: 80px;
  padding: 5px 5px 0;
  background: #a1e084;
  border: 1px solid #8cbf75;
  border-bottom: 0;
  border-radius: 5px 5px 0 0;
  box-shadow: 0 0 3px rgba(0, 0, 0, 0.3), 0 0 40px rgba(0, 0, 0, 0.15);
}

.app {
  display: flex;
  flex-direction: column;
  align-items: center;
  gap: 4px;
}

.app > svg {
  width: 64px;
  height: 64px;
  filter: drop-shadow(0 1px 1px rgba(0, 0, 0, 0.3));
}

.running::after {
  content: "";
  width: 4px;
  height: 4px;
  border-radius: 50%;
  background: #205010;
}

.divider {
  width: 1px;
  height: 60px;
  margin: 4px 12px 0 13px;
  background: #7fb068;
}

.skype-s {
  font: 700 46px "Liberation Sans", sans-serif;
  fill: #fff;
}

.quiz {
  font: 700 14px "DejaVu Sans", sans-serif;
  fill: #fff;
}

.tools {
  font: 700 9px "Liberation Sans", sans-serif;
  fill: #2a7fb4;
}

.fadgi {
  font: 700 24px Lato, sans-serif;
  fill: #fff;
}
```
